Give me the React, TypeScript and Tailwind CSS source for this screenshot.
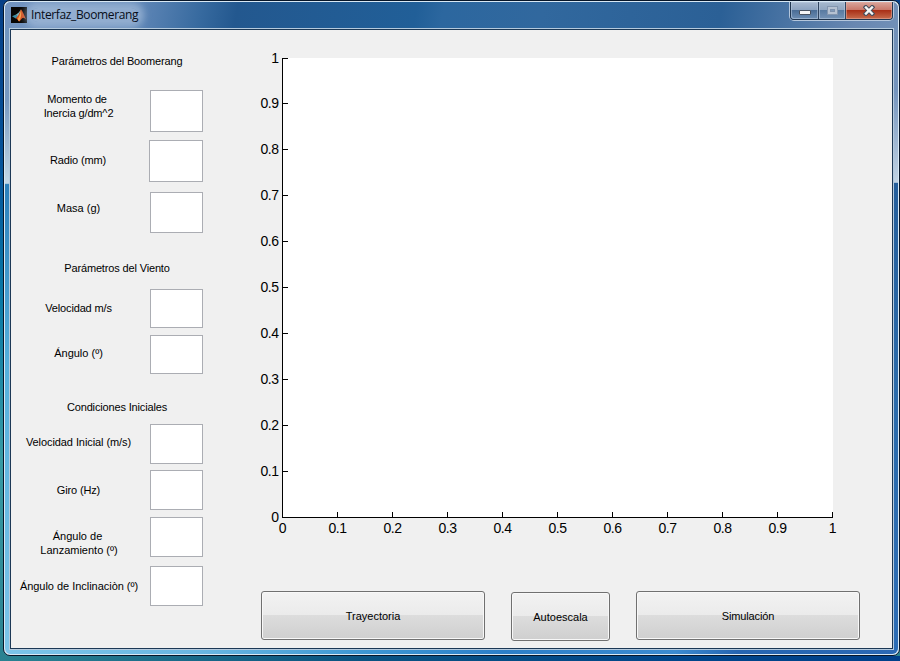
import React from 'react';

type Field = { lines: string[]; label: string; box: string };

const boomerang: Field[] = [
  { lines: ['Momento de', 'Inercia g/dm^2'], label: 'mt-[2px]', box: 'ml-[4px] h-[42px] w-[53px]' },
  { lines: ['Radio (mm)'], label: 'mt-[13px] pr-px', box: 'ml-[3px] h-[42px] w-[54px]' },
  { lines: ['Masa (g)'], label: 'mt-[11px] tracking-normal', box: 'ml-[4px] mt-[2px] h-[41px] w-[53px]' },
];
const viento: Field[] = [
  { lines: ['Velocidad m/s'], label: 'mt-[12px]', box: 'ml-[4px] h-[39px] w-[53px]' },
  { lines: ['Ángulo (º)'], label: 'mt-[11px] tracking-normal', box: 'ml-[4px] h-[39px] w-[53px]' },
];
const iniciales: Field[] = [
  { lines: ['Velocidad Inicial (m/s)'], label: 'mt-[11px] tracking-[-0.08px]', box: 'ml-[4px] h-[40px] w-[53px]' },
  { lines: ['Giro (Hz)'], label: 'mt-[13px]', box: 'ml-[4px] h-[40px] w-[53px]' },
  { lines: ['Ángulo de', 'Lanzamiento (º)'], label: 'mt-[13px] pl-px tracking-normal', box: 'ml-[4px] mt-px h-[40px] w-[53px]' },
  { lines: ['Ángulo de Inclinaciòn (º)'], label: 'mt-[17px] pl-px tracking-[-0.03px]', box: 'ml-[4px] mt-[4px] h-[40px] w-[53px]' },
];

function Row({ field, height }: { field: Field; height: string }) {
  return (
    <div className={`flex items-start ${height}`}>
      <div className={`w-[135px] shrink-0 text-center whitespace-nowrap ${field.label}`}>
        {field.lines.map((l, i) => (
          <div key={l} className={i === 0 && field.lines.length > 1 ? 'pr-[3px]' : ''}>{l}</div>
        ))}
      </div>
      <div className={`shrink-0 border border-[#abadb3] bg-white ${field.box}`} />
    </div>
  );
}

function Heading({ children }: { children: React.ReactNode }) {
  return <div className="w-[212px] text-center whitespace-nowrap">{children}</div>;
}

const ticks = ['0', '0.1', '0.2', '0.3', '0.4', '0.5', '0.6', '0.7', '0.8', '0.9', '1'];

function Axes() {
  return (
    <svg width="610" height="500" viewBox="250 45 610 500" className="block" shapeRendering="crispEdges">
      <rect x="282" y="58" width="551" height="460" fill="#fff" />
      <path d="M282.5 58V518M282 517.5H833" stroke="#000" fill="none" />
      {ticks.map((t, i) => {
        const x = Math.round(282 + i * 55) + 0.5;
        const y = Math.floor(517 - i * 45.9) + 0.5;
        return (
          <g key={t}>
            <path d={`M${x} 517V512M283 ${y}H288`} stroke="#000" />
            <text x={x} y="533" textAnchor="middle">{t}</text>
            <text x="278.5" y={y + 4.5} textAnchor="end">{t}</text>
          </g>
        );
      })}
    </svg>
  );
}

function PushButton({ label, size }: { label: string; size: string }) {
  return (
    <button className={`flex items-center justify-center rounded-[3px] border border-[#707070] bg-[linear-gradient(#f2f2f2,#ebebeb_48%,#dddddd_48%,#cfcfcf)] pt-px shadow-[inset_0_0_0_1px_#f8f8f8] ${size}`}>
      {label}
    </button>
  );
}

function MatlabIcon() {
  return (
    <svg width="16" height="16" viewBox="0 0 16 16" className="shrink-0">
      <rect width="16" height="16" fill="#080604" />
      <path d="M1 9.3 5 7.4 7.4 9.4 4.7 11.6Z" fill="#3f8fa6" />
      <path d="M5 7.4 7.5 5.7 10 2.5 7.8 9.2 6.6 9.2Z" fill="#7ab2b8" />
      <path d="M10 2.3C8.9 5 8 8.3 4.7 11.6 6.3 11 6.8 13.7 8.1 14.4 10 13.7 10.7 10.9 12.2 10.8 13.2 10.8 14 11.8 15 12.4 13.4 9 11.8 4.3 10 2.3Z" fill="#d8501c" />
      <path d="M10 2.3C9.4 6 8.6 10.3 6.5 11.9L8.1 14.4C9.7 12 10.7 8 10 2.3Z" fill="#f5a34d" />
    </svg>
  );
}

function Controls() {
  return (
    <div className="flex h-[18px] w-[103px] rounded-b-[4px] border border-t-0 border-[#20364f] shadow-[0_0_0_1px_#b4c6dc]">
      <div className="flex w-[28px] items-center justify-center rounded-bl-[3px] border-r border-[#30445f] bg-[linear-gradient(#a9bad0,#8ba2bf_48%,#496c95_48%,#6d8eb3)] pt-[4px] shadow-[inset_0_0_0_1px_#b5c8dd99]">
        <div className="h-[5px] w-[12px] rounded-[1px] border border-[#485260] bg-[#f5f5f5]" />
      </div>
      <div className="flex w-[27px] items-center justify-center border-r border-[#30445f] bg-[linear-gradient(#a6b8cd,#8fa5c0_48%,#587aa1_48%,#7593b6)] shadow-[inset_0_0_0_1px_#b5c8dd99]">
        <div className="flex h-[9px] w-[11px] items-center justify-center border border-[#8396af] bg-[#b6c2d2]">
          <div className="h-[3px] w-[5px] border border-[#7d91ac] bg-[#819bb9]" />
        </div>
      </div>
      <div className="flex flex-1 items-center justify-center rounded-br-[3px] bg-[linear-gradient(#d9a69d,#c87668_48%,#a92e16_48%,#c76c4d)] shadow-[inset_0_0_0_1px_#e4aea388]">
        <svg width="12" height="11" viewBox="0 0 12 11">
          <path d="M2.8 2.3 9.2 8.7M9.2 2.3 2.8 8.7" stroke="#48505e" strokeWidth="4.4" strokeLinecap="square" />
          <path d="M3 2.5 9 8.5M9 2.5 3 8.5" stroke="#f6f6f6" strokeWidth="2.4" strokeLinecap="square" />
        </svg>
      </div>
    </div>
  );
}

export default function App() {
  return (
    <div className="h-[661px] w-[900px] overflow-hidden bg-[linear-gradient(90deg,#2a8291,#0a5381_40%,#00468a_75%,#00408a)] font-['Liberation_Sans',Arial,sans-serif] text-[11px] leading-[14px] tracking-[-0.15px] text-black">
      <div className="h-[656px] bg-[linear-gradient(#063f86,#05539a_25%,#0878a5_45%,#379ba4_70%,#2a8291)] pl-[3px]">
        <div className="flex h-[656px] w-[897px] flex-col overflow-hidden rounded-[7px] border border-[#071629] bg-[#d8e8f4] p-px">
          <div className="flex min-h-0 flex-1 flex-col overflow-hidden rounded-[6px] bg-[linear-gradient(#6f94be,#7799c1_15%,#c4d7e5_27.8%,#2c80bb_28%,#55b0dc_56%,#7cc4e9)]">
            <header className="flex h-[26px] shrink-0 items-start justify-between bg-[linear-gradient(100deg,#7495c1_0,#6087b7_15%,#376a9f_22%,#23588f_26%,#215f98_46%,#2c679f_49%,#31689e_60%,#2b6096_80%,#6887b1_95%,#7190b7)]">
              <div className="flex items-center gap-[4px] pt-[5px] pl-[6px]">
                <MatlabIcon />
                <span className="rounded-full bg-[#a9c0dc]/65 font-['Open_Sans','Noto_Sans',sans-serif] text-[12px] leading-[14px] tracking-[-0.36px] text-[#070d18] shadow-[0_0_7px_6px_#a9c0dca6]">Interfaz_Boomerang</span>
              </div>
              <div className="pr-[5px]"><Controls /></div>
            </header>
            <div className="flex h-[622px] shrink-0">
              <div className="w-[4px]" />
              <main className="flex h-[622px] w-[885px] border border-[#b5cadd]">
                <div className="flex h-[620px] w-[883px] border border-[#1c3855] bg-[#f0f0f0]">
                  <section className="flex w-[239px] shrink-0 flex-col pt-[24px]">
                    <Heading>Parámetros del Boomerang</Heading>
                    <div className="mt-[22px] flex flex-col">
                      <Row field={boomerang[0]} height="h-[50px]" />
                      <Row field={boomerang[1]} height="h-[50px]" />
                      <Row field={boomerang[2]} height="h-[43px]" />
                    </div>
                    <div className="mt-[28px]"><Heading>Parámetros del Viento</Heading></div>
                    <div className="mt-[14px] flex flex-col">
                      <Row field={viento[0]} height="h-[46px]" />
                      <Row field={viento[1]} height="h-[39px]" />
                    </div>
                    <div className="mt-[26px]"><Heading>Condiciones Iniciales</Heading></div>
                    <div className="mt-[10px] flex flex-col">
                      <Row field={iniciales[0]} height="h-[46px]" />
                      <Row field={iniciales[1]} height="h-[46px]" />
                      <Row field={iniciales[2]} height="h-[46px]" />
                      <Row field={iniciales[3]} height="h-[44px]" />
                    </div>
                  </section>
                  <section className="flex flex-1 flex-col pt-[15px]">
                    <div className="text-[14px] tracking-[-0.45px]"><Axes /></div>
                    <div className="mt-[46px] flex gap-[26px] pl-[11px]">
                      <PushButton label="Trayectoria" size="h-[49px] w-[224px] tracking-normal" />
                      <PushButton label="Autoescala" size="mt-px h-[49px] w-[99px] tracking-normal" />
                      <PushButton label="Simulación" size="h-[49px] w-[224px]" />
                    </div>
                  </section>
                </div>
              </main>
              <div className="flex-1 bg-[linear-gradient(#7190b7,#7494bd_10%,#c0d2e3_24.8%,#245e9b_25%,#2c6cab_60%,#2b6cb5)]" />
            </div>
            <footer className="min-h-0 flex-1 bg-[linear-gradient(90deg,#7cc4e9,#69b6e1_22%,#3d97d3_40%,#2c7fc8_56%,#3b8bd0_75%,#2565b1_82%,#2b69b4)]" />
          </div>
        </div>
      </div>
    </div>
  );
}
